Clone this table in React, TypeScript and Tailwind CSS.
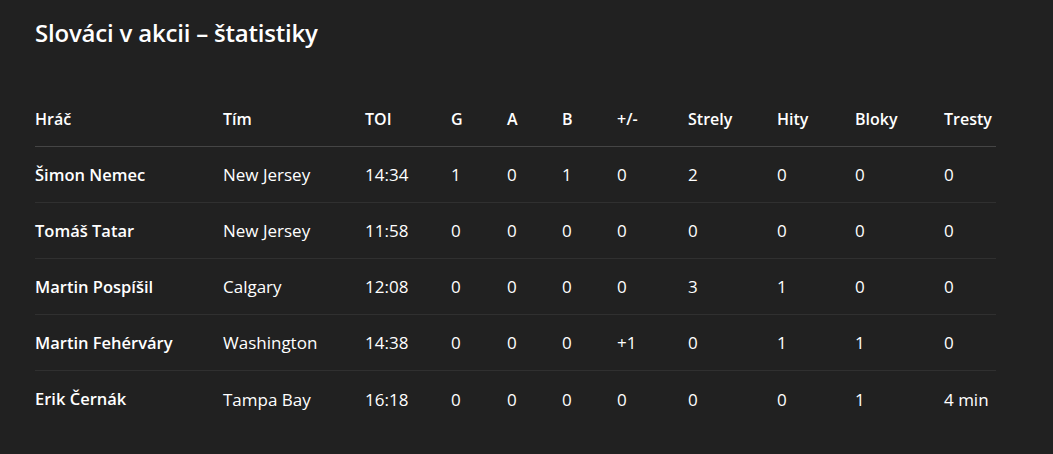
const COLUMNS = [
  { label: "Hráč", width: "w-[188px]" },
  { label: "Tím", width: "w-[142px]" },
  { label: "TOI", width: "w-[86px]" },
  { label: "G", width: "w-[56px]" },
  { label: "A", width: "w-[55px]" },
  { label: "B", width: "w-[55px]" },
  { label: "+/-", width: "w-[71px]" },
  { label: "Strely", width: "w-[89px]" },
  { label: "Hity", width: "w-[78px]" },
  { label: "Bloky", width: "w-[89px]" },
  { label: "Tresty", width: "w-[52px]" },
];

const ROWS: string[][] = [
  ["Šimon Nemec", "New Jersey", "14:34", "1", "0", "1", "0", "2", "0", "0", "0"],
  ["Tomáš Tatar", "New Jersey", "11:58", "0", "0", "0", "0", "0", "0", "0", "0"],
  ["Martin Pospíšil", "Calgary", "12:08", "0", "0", "0", "0", "3", "1", "0", "0"],
  ["Martin Fehérváry", "Washington", "14:38", "0", "0", "0", "+1", "0", "1", "1", "0"],
  ["Erik Černák", "Tampa Bay", "16:18", "0", "0", "0", "0", "0", "0", "1", "4 min"],
];

export default function App() {
  return (
    <div
      className="min-h-screen bg-[#212121] px-[35px] pt-[17px] text-white"
      style={{ fontFamily: '"Open Sans", "Noto Sans", Arial, sans-serif' }}
    >
      <h2 className="text-[24px] font-semibold leading-8 tracking-[-0.2px]">
        Slováci v akcii – štatistiky
      </h2>

      <table className="mt-[41px] w-[961px] table-fixed border-collapse">
        <thead>
          <tr className="h-[56px] border-b border-[#454545]">
            {COLUMNS.map((col) => (
              <th
                key={col.label}
                className={`${col.width} p-0 pt-[2px] text-left text-[16px] font-semibold whitespace-nowrap`}
              >
                {col.label}
              </th>
            ))}
          </tr>
        </thead>
        <tbody>
          {ROWS.map((row, i) => (
            <tr
              key={row[0]}
              className={`h-[56px] ${i < ROWS.length - 1 ? "border-b border-[#303030]" : ""}`}
            >
              {row.map((cell, j) => (
                <td
                  key={j}
                  className={`p-0 pt-[2px] whitespace-nowrap ${j === 0 ? "text-[16.5px] font-semibold" : "text-[17px] font-normal"}`}
                >
                  {cell}
                </td>
              ))}
            </tr>
          ))}
        </tbody>
      </table>
    </div>
  );
}
